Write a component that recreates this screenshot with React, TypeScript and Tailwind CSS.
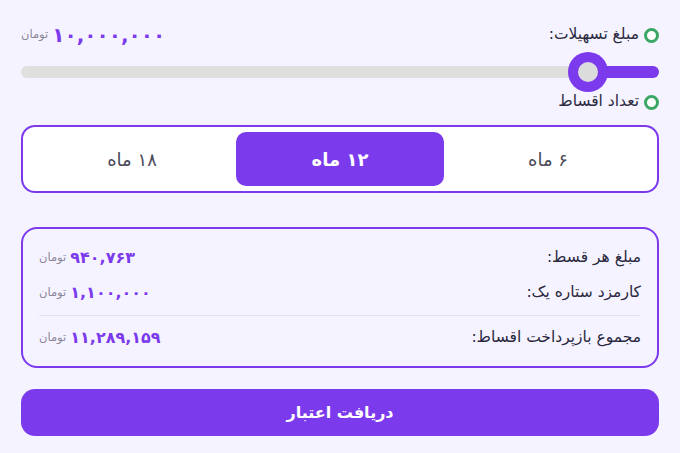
import { useState } from "react";

const months = [6, 12, 18];

const toFa = (n: number) =>
  n
    .toLocaleString("en-US")
    .replace(/\d/g, (d) => "۰۱۲۳۴۵۶۷۸۹"[Number(d)]);

const Dot = () => (
  <span className="inline-block w-[15px] h-[15px] rounded-full border-[3px] border-[#3aa864] bg-white shrink-0" />
);

const Row = ({ label, value }: { label: string; value: number }) => (
  <div className="flex items-center justify-between h-[24px]">
    <span className="text-[15.5px] text-[#2b2940]">{label}</span>
    <div className="flex items-center gap-[4px]">
      <span className="text-[16px] font-bold text-[#7c3aed] leading-none">
        {toFa(value)}
      </span>
      <span className="text-[11.5px] text-[#8a8797] leading-none">تومان</span>
    </div>
  </div>
);

export default function App() {
  const [active, setActive] = useState(12);

  return (
    <div
      dir="rtl"
      className="min-h-screen bg-[#f5f3ff] px-[21px] pt-[21px] font-['DejaVu_Sans',sans-serif]"
    >
      <div className="flex items-center justify-between h-[28px]">
        <div className="flex items-center gap-[5px]">
          <Dot />
          <span className="text-[15.5px] text-[#2b2940]">مبلغ تسهیلات:</span>
        </div>
        <div className="flex items-center gap-[4px]">
          <span className="text-[20px] font-bold text-[#7c3aed] leading-none">
            {toFa(10000000)}
          </span>
          <span className="text-[11.5px] text-[#8a8797] leading-none">تومان</span>
        </div>
      </div>

      <div className="relative h-[40px] mt-[3px] flex items-center">
        <div className="flex w-full h-[12px]">
          <div className="w-[71px] h-full bg-[#7c3aed] rounded-r-full" />
          <div className="flex-1 h-full bg-[#dfdfdf] rounded-l-full" />
        </div>
        <div className="absolute right-[51px] top-0 w-[40px] h-[40px] rounded-full bg-[#7c3aed] flex items-center justify-center">
          <div className="w-[20px] h-[20px] rounded-full bg-[#dcdcdc]" />
        </div>
      </div>

      <div className="flex items-center gap-[5px] h-[20px]">
        <Dot />
        <span className="text-[15.5px] text-[#2b2940]">تعداد اقساط</span>
      </div>

      <div className="mt-[13px] h-[68px] rounded-[14px] border-2 border-[#7c3aed] bg-white p-[5px] grid grid-cols-3">
        {months.map((m) => (
          <button
            key={m}
            onClick={() => setActive(m)}
            className={
              m === active
                ? "rounded-[10px] bg-[#7c3aed] text-white text-[18px] font-bold"
                : "rounded-[10px] text-[#4b4a5a] text-[18px]"
            }
          >
            {toFa(m)} ماه
          </button>
        ))}
      </div>

      <div className="mt-[34px] h-[141px] rounded-[16px] border-2 border-[#7c3aed] px-[16px] pt-[17px]">
        <Row label="مبلغ هر قسط:" value={940763} />
        <div className="mt-[11px]">
          <Row label="کارمزد ستاره یک:" value={1100000} />
        </div>
        <div className="mt-[10px] border-t border-[#e4e2ec]" />
        <div className="mt-[10px]">
          <Row label="مجموع بازپرداخت اقساط:" value={11289159} />
        </div>
      </div>

      <button className="mt-[21px] w-full h-[47px] rounded-[14px] bg-[#7c3aed] text-white text-[16px] font-bold">
        دریافت اعتبار
      </button>
    </div>
  );
}
